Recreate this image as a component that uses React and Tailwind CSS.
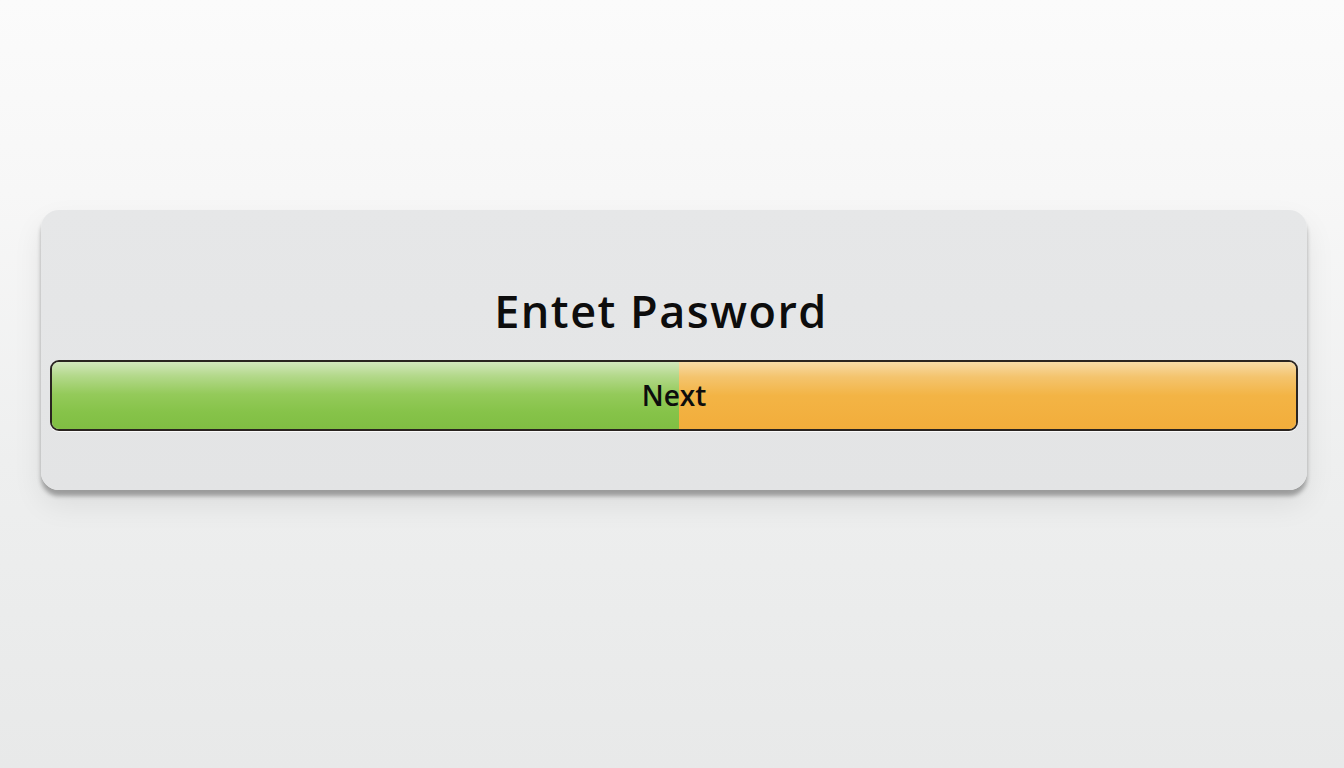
export default function App() {
  return (
    <div className="w-[1344px] h-[768px] overflow-hidden bg-[linear-gradient(180deg,#fbfbfb_0%,#f7f7f7_25%,#eeefef_60%,#e8e9e9_100%)] pt-[210px] px-[37px]" style={{ fontFamily: '"Open Sans", "DejaVu Sans", sans-serif' }}>
      <div className="ml-[4px] w-[1266px] h-[280px] rounded-[18px] bg-[linear-gradient(180deg,#e6e7e8_0%,#e3e4e5_100%)] shadow-[0_6px_4px_rgba(0,0,0,0.3),0_14px_30px_rgba(0,0,0,0.08)] flex flex-col items-center">
        <div className="mt-[66px] h-[68px] flex items-center pr-[26px]">
          <span className="text-[45px] leading-none tracking-[1.5px] font-semibold text-[#0d0d0d]">Entet Pasword</span>
        </div>
        <div className="mt-[16px] w-[1248px] h-[71px] rounded-[9px] border-[2px] border-[#2a2420] overflow-hidden relative flex shadow-[0_1px_0_rgba(255,255,255,0.8)]">
          <div className="w-[627px] h-full bg-[linear-gradient(180deg,#d3e7bd_0%,#b4d98c_20%,#94ca5a_48%,#86c349_75%,#80be43_100%)]" />
          <div className="flex-1 h-full bg-[linear-gradient(180deg,#f7dba6_0%,#f4c46e_22%,#f3b445_50%,#f2ad3b_100%)]" />
          <div className="absolute inset-0 flex items-center justify-center">
            <span className="text-[28px] leading-none font-semibold text-[#0d0d0d] mt-[-2px]">Next</span>
          </div>
        </div>
      </div>
    </div>
  );
}
